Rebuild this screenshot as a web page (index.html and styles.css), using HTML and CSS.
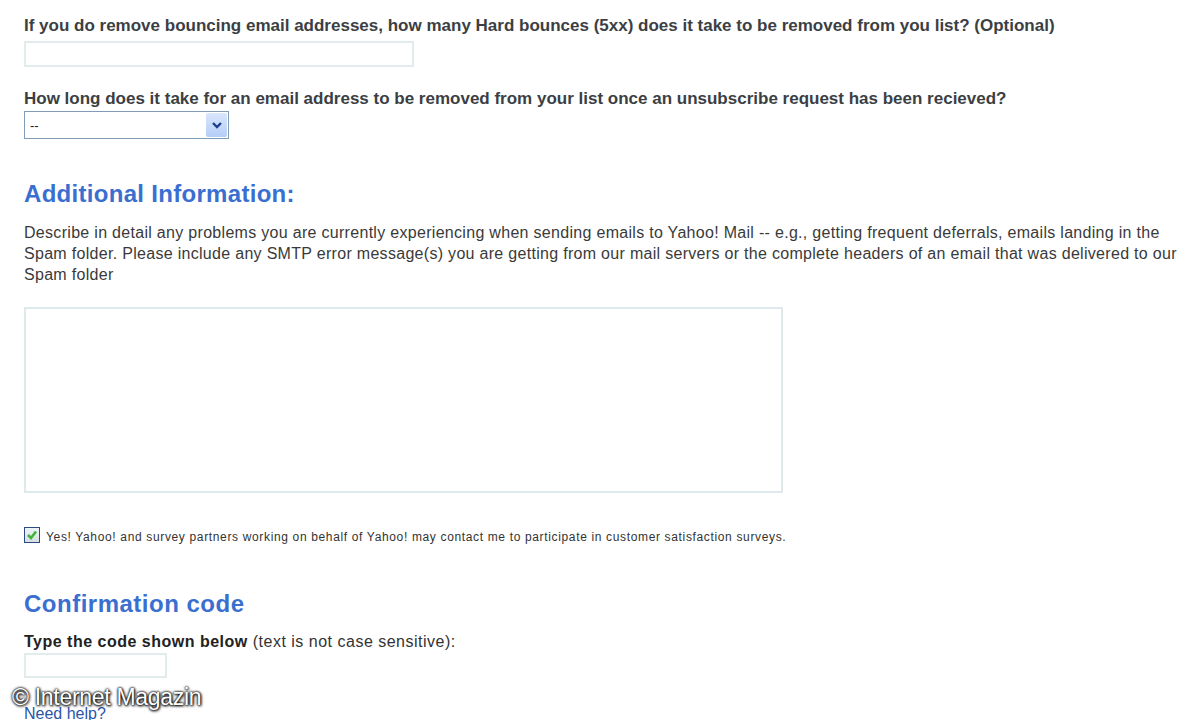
FILE: index.html
```html
<!DOCTYPE html>
<html>
<head>
<meta charset="utf-8">
<link rel="stylesheet" href="styles.css">
</head>
<body>
<div class="page">
  <div class="field">
    <label class="q">If you do remove bouncing email addresses, how many Hard bounces (5xx) does it take to be removed from you list? (Optional)</label>
    <div class="textbox wide"></div>
  </div>
  <div class="field second">
    <label class="q">How long does it take for an email address to be removed from your list once an unsubscribe request has been recieved?</label>
    <div class="select">
      <span class="select-value">--</span>
      <span class="select-btn">
        <svg width="12" height="10" viewBox="0 0 12 10"><path d="M2 3 L6 7 L10 3" fill="none" stroke="#1d3f8c" stroke-width="2.4"/></svg>
      </span>
    </div>
  </div>

  <h2 class="section first">Additional Information:</h2>
  <p class="desc">Describe in detail any problems you are currently experiencing when sending emails to Yahoo! Mail -- e.g., getting frequent deferrals, emails landing in the Spam folder. Please include any SMTP error message(s) you are getting from our mail servers or the complete headers of an email that was delivered to our Spam folder</p>
  <div class="textarea"></div>

  <div class="consent">
    <span class="checkbox">
      <svg width="12" height="12" viewBox="0 0 12 12"><path d="M2 6 L5 9 L10 2.5" fill="none" stroke="#3fb53a" stroke-width="2.6"/></svg>
    </span>
    <span class="consent-text">Yes! Yahoo! and survey partners working on behalf of Yahoo! may contact me to participate in customer satisfaction surveys.</span>
  </div>

  <h2 class="section second-h">Confirmation code</h2>
  <p class="code-label"><b>Type the code shown below</b> (text is not case sensitive):</p>
  <div class="textbox code"></div>
  <a class="help" href="#">Need help?</a>
</div>
<div class="watermark">© Internet Magazin</div>
</body>
</html>
```

FILE: styles.css
```css
html, body {
  margin: 0;
  padding: 0;
  background: #ffffff;
}
body {
  font-family: "Liberation Sans", Arial, sans-serif;
  color: #333;
  width: 1200px;
  height: 720px;
  overflow: hidden;
  position: relative;
}
.page {
  padding: 16px 0 0 24px;
  display: flex;
  flex-direction: column;
  align-items: flex-start;
}
.field {
  display: flex;
  flex-direction: column;
  align-items: flex-start;
}
.field.second {
  margin-top: 22px;
}
.q {
  font-size: 17px;
  font-weight: bold;
  letter-spacing: 0;
  line-height: 20px;
  color: #3b3f44;
  margin-bottom: 5px;
}
.field.second .q {
  margin-bottom: 2px;
}
.textbox {
  box-sizing: border-box;
  height: 26px;
  border: 2px solid #e3eced;
  background: #fff;
}
.textbox.wide {
  width: 390px;
}
.select {
  box-sizing: border-box;
  width: 205px;
  height: 28px;
  border: 1px solid #7f9db9;
  display: flex;
  align-items: stretch;
  background: #fff;
}
.select-value {
  flex: 1;
  font-size: 13px;
  padding-left: 5px;
  display: flex;
  align-items: center;
  color: #222;
}
.select-btn {
  width: 21px;
  margin: 1px;
  background: linear-gradient(#d9e6fc, #b6cdf7);
  border-radius: 2px;
  display: flex;
  align-items: center;
  justify-content: center;
}
.section {
  margin: 0;
  font-size: 24px;
  line-height: 30px;
  font-weight: bold;
  color: #3a6fd0;
  letter-spacing: 0.3px;
}
.section.first {
  margin-top: 40px;
}
.section.second-h {
  margin-top: 45px;
  letter-spacing: 0.5px;
}
.desc {
  margin: 13px 0 0;
  width: 1160px;
  font-size: 16px;
  line-height: 21px;
  color: #3a3a3a;
  letter-spacing: 0.3px;
}
.textarea {
  box-sizing: border-box;
  margin-top: 22px;
  width: 759px;
  height: 186px;
  border: 2px solid #dde9ea;
}
.consent {
  margin-top: 32px;
  display: flex;
  align-items: center;
  gap: 6px;
}
.checkbox {
  box-sizing: border-box;
  width: 16px;
  height: 16px;
  border: 1px solid #2c4a8a;
  background: linear-gradient(#eef3f5, #d6dfe3);
  display: flex;
  align-items: center;
  justify-content: center;
}
.consent-text {
  font-size: 12px;
  letter-spacing: 0.65px;
  color: #333;
  padding-top: 5px;
}
.code-label {
  margin: 13px 0 0;
  font-size: 16px;
  line-height: 20px;
  color: #333;
  letter-spacing: 0.5px;
}
.code-label b {
  color: #222;
}
.textbox.code {
  width: 143px;
  height: 25px;
  margin-top: 1px;
}
.help {
  margin-top: 26px;
  font-size: 16px;
  color: #2a55a8;
  text-decoration: none;
  line-height: 20px;
}
.watermark {
  position: absolute;
  left: 12px;
  top: 684px;
  font-size: 23px;
  letter-spacing: -0.3px;
  color: #fff;
  text-shadow: 0 0 2px #000, 0 0 3px #000, 1px 1px 3px #000;
}
```
